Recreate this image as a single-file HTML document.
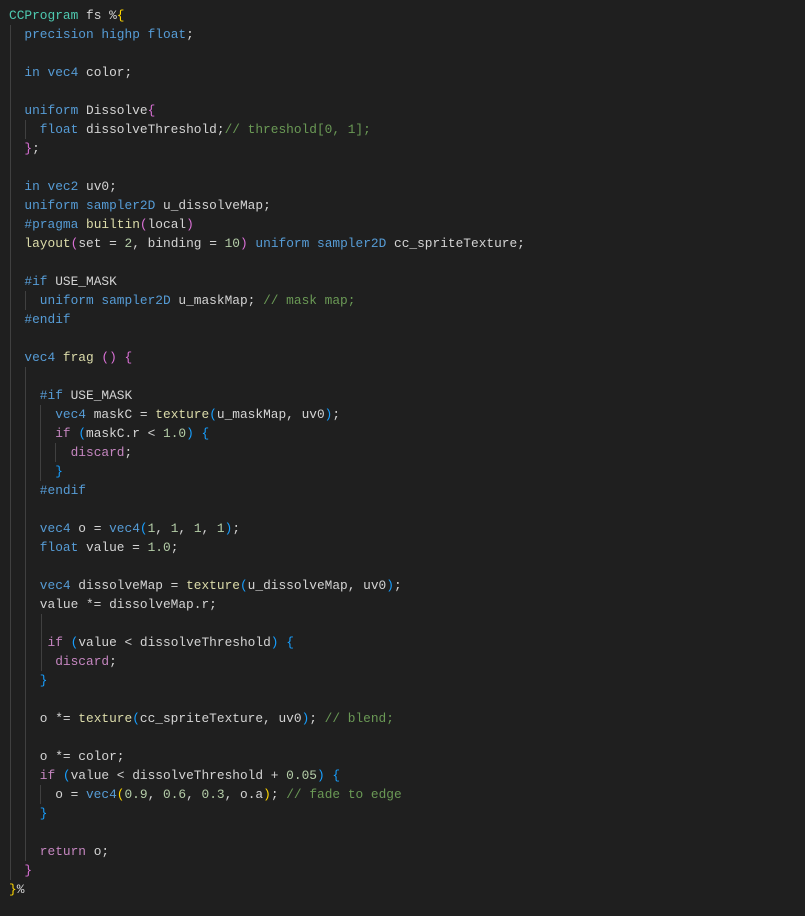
<!DOCTYPE html>
<html><head><meta charset="utf-8"><style>
html,body{margin:0;padding:0;background:#1f1f1f;}
body{width:805px;height:916px;overflow:hidden;position:relative;}
pre{margin:0;position:absolute;left:9px;top:5.5px;font-family:"Liberation Mono",monospace;font-size:12.83px;line-height:19px;color:#d4d4d4;white-space:pre;}
.t{color:#4ec9b0}.k{color:#569cd6}.f{color:#dcdcaa}.n{color:#b5cea8}.c{color:#6a9955}.p{color:#c586c0}
.y{color:#ffd700}.m{color:#da70d6}.b{color:#179fff}
.g{position:absolute;width:1px;background:#404040;}
</style></head><body>
<div class="g" style="left:10px;top:24.5px;height:855px"></div>
<div class="g" style="left:25px;top:119.5px;height:19px"></div>
<div class="g" style="left:25px;top:290.5px;height:19px"></div>
<div class="g" style="left:25px;top:366.5px;height:494px"></div>
<div class="g" style="left:40px;top:404.5px;height:76px"></div>
<div class="g" style="left:55px;top:442.5px;height:19px"></div>
<div class="g" style="left:41px;top:613.5px;height:57px"></div>
<div class="g" style="left:40px;top:784.5px;height:19px"></div>
<pre><span class="t">CCProgram</span> fs %<span class="y">{</span>
  <span class="k">precision</span> <span class="k">highp</span> <span class="k">float</span>;

  <span class="k">in</span> <span class="k">vec4</span> color;

  <span class="k">uniform</span> Dissolve<span class="m">{</span>
    <span class="k">float</span> dissolveThreshold;<span class="c">// threshold[0, 1];</span>
  <span class="m">}</span>;

  <span class="k">in</span> <span class="k">vec2</span> uv0;
  <span class="k">uniform</span> <span class="k">sampler2D</span> u_dissolveMap;
  <span class="k">#pragma</span> <span class="f">builtin</span><span class="m">(</span>local<span class="m">)</span>
  <span class="f">layout</span><span class="m">(</span>set = <span class="n">2</span>, binding = <span class="n">10</span><span class="m">)</span> <span class="k">uniform</span> <span class="k">sampler2D</span> cc_spriteTexture;

  <span class="k">#if</span> USE_MASK
    <span class="k">uniform</span> <span class="k">sampler2D</span> u_maskMap; <span class="c">// mask map;</span>
  <span class="k">#endif</span>

  <span class="k">vec4</span> <span class="f">frag</span> <span class="m">()</span> <span class="m">{</span>

    <span class="k">#if</span> USE_MASK
      <span class="k">vec4</span> maskC = <span class="f">texture</span><span class="b">(</span>u_maskMap, uv0<span class="b">)</span>;
      <span class="p">if</span> <span class="b">(</span>maskC.r &lt; <span class="n">1.0</span><span class="b">)</span> <span class="b">{</span>
        <span class="p">discard</span>;
      <span class="b">}</span>
    <span class="k">#endif</span>

    <span class="k">vec4</span> o = <span class="k">vec4</span><span class="b">(</span><span class="n">1</span>, <span class="n">1</span>, <span class="n">1</span>, <span class="n">1</span><span class="b">)</span>;
    <span class="k">float</span> value = <span class="n">1.0</span>;

    <span class="k">vec4</span> dissolveMap = <span class="f">texture</span><span class="b">(</span>u_dissolveMap, uv0<span class="b">)</span>;
    value *= dissolveMap.r;

     <span class="p">if</span> <span class="b">(</span>value &lt; dissolveThreshold<span class="b">)</span> <span class="b">{</span>
      <span class="p">discard</span>;
    <span class="b">}</span>

    o *= <span class="f">texture</span><span class="b">(</span>cc_spriteTexture, uv0<span class="b">)</span>; <span class="c">// blend;</span>

    o *= color;
    <span class="p">if</span> <span class="b">(</span>value &lt; dissolveThreshold + <span class="n">0.05</span><span class="b">)</span> <span class="b">{</span>
      o = <span class="k">vec4</span><span class="y">(</span><span class="n">0.9</span>, <span class="n">0.6</span>, <span class="n">0.3</span>, o.a<span class="y">)</span>; <span class="c">// fade to edge</span>
    <span class="b">}</span>

    <span class="p">return</span> o;
  <span class="m">}</span>
<span class="y">}</span>%</pre>
</body></html>
